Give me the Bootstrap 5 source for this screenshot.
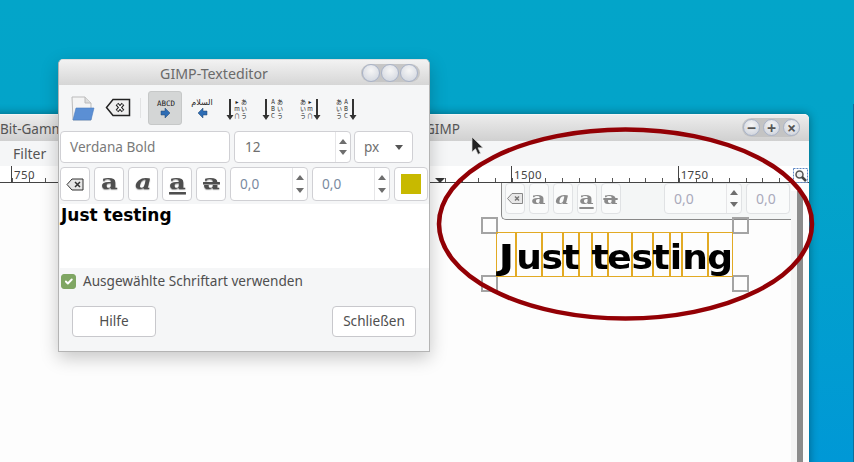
<!DOCTYPE html>
<html lang="de">
<head>
<meta charset="utf-8">
<title>GIMP-Texteditor</title>
<link href="https://cdn.jsdelivr.net/npm/bootstrap@5.3.0/dist/css/bootstrap.min.css" rel="stylesheet">
<style>
html,body{margin:0;padding:0;background:#03a4c9;overflow:hidden}
.desk{position:relative;width:854px;height:462px;overflow:hidden;font-family:"Noto Sans","Open Sans",sans-serif;color:#4c4c4c;
 background:linear-gradient(180deg,#03a5c9 0,#03a3c9 180px,#0098d6 462px)}
.edge{position:absolute;left:853px;top:104px;width:1px;height:358px;background:#0a6f9c}
.mainwin{position:absolute;left:-20px;top:114px;width:829px;height:360px;background:#fff;border-radius:5px 5px 0 0;box-shadow:0 0 10px rgba(0,0,0,.4)}
.mtitle{height:27px;background:linear-gradient(180deg,#ececec,#d0d0d0);font-size:13.5px;line-height:29px;color:#555;border-radius:5px 5px 0 0;border-top:1px solid #f4f4f4}
.mtitle .t1{width:445px;padding-left:20px}
.wctl{position:absolute;left:762px;top:4px;height:19px;width:58px;border-radius:10px;background:#c4c4c4;gap:3px;padding-left:1px}
.wctl span{width:17px;height:17px;border-radius:50%;background:radial-gradient(circle at 50% 35%,#f6f6f6,#c9ced8);border:1px solid #a9b3c8;display:flex;align-items:center;justify-content:center;font-size:16px;line-height:1;font-weight:700;color:#555}
.mmenu{height:25px;background:#f5f6f7;font-size:14px;line-height:26px;padding-left:33px;color:#555}
.ruler{height:17px;background:#fff;border-bottom:1px solid #444;padding-left:31px;overflow:hidden}
.rcell{flex:0 0 166.67px;height:16px;border-left:1px solid #444;font-size:11.5px;line-height:17px;padding-left:2px;letter-spacing:.4px;color:#444;
 background:repeating-linear-gradient(90deg,#555 0 1px,transparent 1px 16.67px) no-repeat 0 bottom/100% 4px}
.rmark{position:absolute;left:455px;top:64px;width:0;height:0;border-left:5px solid transparent;border-right:5px solid transparent;border-top:5px solid #333}
.zoombtn{position:absolute;left:813px;top:54px}
.canvas{position:relative;height:290px;background:#fdfdfd}
.sgrey{position:absolute;left:817px;top:8px;width:6px;height:300px;background:#8c8c8c}
.spale{position:absolute;left:811px;top:8px;width:6px;height:300px;background:#f5f5f5}
.ghost{position:absolute;left:521px;top:0;width:290px;height:37px;background:#f4f6f6;border-left:1px solid #888;border-bottom:1px solid #888;border-radius:0 0 0 5px;padding-left:3px;gap:4px}
.gb{width:20px;height:31px;background:#fafbfb;border:1px solid #e0e2e4;border-radius:4px;display:flex;align-items:center;justify-content:center;overflow:hidden}
.gspin{height:31px;background:#fafbfb;border:1px solid #e0e2e4;border-radius:4px;font-size:14px;color:#aab;display:flex;align-items:center}
.gspin.s1{width:78px;margin-left:39px;padding-left:9px;justify-content:space-between}
.gspin.s2{width:44px;margin-left:0;padding-left:9px}
.hd{position:absolute;width:17px;height:17px;border:2px solid #a4a4a4;background:transparent}
.h1{left:501px;top:34px}.h2{left:752px;top:34px}.h3{left:501px;top:92px}.h4{left:752px;top:92px}
.glyphs{position:absolute;left:516px;top:49px;width:237px;height:45px;font-family:"DejaVu Sans",sans-serif;font-weight:700;font-size:34px;color:#000;line-height:48px}
.glyphs span{display:flex;justify-content:center;height:45px;border:1px solid #e2aa24;overflow:visible;white-space:pre}
.glyphs span i{display:block;font-style:normal;transform:scaleX(1.06)}
.glyphs span:nth-child(1){width:20px}.glyphs span:nth-child(1) i{transform:scaleX(1.25)}
.glyphs span:nth-child(2){width:26px}.glyphs span:nth-child(3){width:21px}
.glyphs span:nth-child(4){width:16px}.glyphs span:nth-child(5){width:13px}.glyphs span:nth-child(6){width:16px}
.glyphs span:nth-child(7){width:24px}.glyphs span:nth-child(8){width:21px}.glyphs span:nth-child(9){width:17px}
.glyphs span:nth-child(10){width:12px}.glyphs span:nth-child(11){width:26px}.glyphs span:nth-child(12){width:25px}
.ring{position:absolute;left:0;top:0;pointer-events:none}
.ptr{position:absolute;left:470px;top:136px}
.dlg{position:absolute;left:58px;top:59px;width:372px;height:293px;background:#f5f6f7;border:1px solid #b4b4b4;border-top-color:#ddd;border-radius:5px 5px 0 0;box-shadow:0 6px 18px rgba(0,0,0,.22)}
.dtitle{position:relative;height:25px;background:linear-gradient(180deg,#f2f2f2,#d6d6d6);text-align:center;font-size:14.2px;line-height:27px;color:#6a6a6a;border-radius:5px 5px 0 0;padding-right:60px}
.dctl{position:absolute;left:302px;top:4px;width:59px;height:18px;border-radius:10px;background:#c6c6c6;gap:1px;padding-left:1px}
.dctl span{width:18px;height:18px;border-radius:50%;background:radial-gradient(circle at 50% 35%,#f6f6f6,#cdd2dc);border:1px solid #a9b3c8}
.dtool{height:46px;padding-left:10px;position:relative}
.sep{position:absolute;left:81px;top:13px;width:1px;height:20px;background:#e2e3e4}
.tsel{position:absolute;left:89px;top:6px;width:34px;height:34px;background:#d4d6d6;border:1px solid #c6c8c8;border-radius:3px}
.ics{position:absolute;left:0;top:0}
.drow{padding-left:1px}
.fieldx{height:32px;background:#fff;border:1px solid #d0d0d4;border-radius:4px;font-size:13.6px;color:#6f6f6f;display:flex;align-items:center}
.ff{width:170px;padding-left:9px;margin-right:4px;color:#7a7a7a}
.fs{width:117px;padding-left:10px;margin-right:3px;justify-content:space-between}
.fu{width:59px;padding:0 9px;justify-content:space-between}
.arr{width:15px;align-self:stretch;border-left:1px solid #e6e6e8;display:flex;flex-direction:column;align-items:center;justify-content:space-evenly}
.up{width:0;height:0;border-left:4px solid transparent;border-right:4px solid transparent;border-bottom:5px solid #6e6e6e}
.dn{width:0;height:0;border-left:4px solid transparent;border-right:4px solid transparent;border-top:5px solid #6e6e6e}
.carr{width:0;height:0;border-left:4.5px solid transparent;border-right:4.5px solid transparent;border-top:5px solid #555}
.row2x{padding-left:1px;margin-top:4px;gap:4px}
.sb{width:30px;height:34px;padding:0;background:#fff;border:1px solid #d0d0d4;border-radius:4px;display:flex;align-items:center;justify-content:center}
.la{display:inline-block;font-family:"DejaVu Serif",serif;font-weight:700;font-size:20px;line-height:1;color:#4e4e4e;text-shadow:0 1px 1px #999;position:relative;top:-2px;transform:scaleX(1.3)}
.gla{display:inline-block;font-family:"DejaVu Serif",serif;font-weight:700;font-size:17px;line-height:1;color:#8b8b8b;transform:scaleX(1.3)}
.ital{font-style:italic}.und{text-decoration:underline;text-decoration-thickness:2px;text-underline-offset:3px}.stk{text-decoration:line-through;text-decoration-thickness:2px}
.f2{height:34px;width:78px;padding-left:9px;justify-content:space-between;color:#7a8aa0}
.swb{width:34px;height:34px;padding:0;background:#fff;border:1px solid #d0d0d4;border-radius:4px;display:flex;align-items:center;justify-content:center}
.swatch{width:20px;height:20px;background:#c8b900}
.tedit{height:64px;margin-top:3px;margin-left:1px;padding-left:1px;background:#fff;font-family:"DejaVu Sans",sans-serif;font-weight:700;font-size:17px;line-height:22px;color:#000}
.chk{height:27px;margin:0;padding:0 0 0 2px;gap:7px;font-size:13.6px;color:#4f4f4f;min-height:0}
.chk .form-check-input{float:none;margin:0;width:15px;height:15px;background-color:#7fa663;border-color:#7fa663;border-radius:3px;opacity:1}
.dbtns{padding:11px 13px 0}
.pb{width:84px;height:31px;padding:0;background:#fff;border:1px solid #c8c8cc;border-radius:4px;font-size:13.6px;color:#4f4f4f}
</style>
</head>
<body>
<div class="desk">
  <div class="edge"></div>

  <div class="mainwin">
    <div class="mtitle d-flex"><span class="t1">Bit-Gamma</span><span>GIMP</span></div>
    <div class="wctl d-flex align-items-center"><span>&#8722;</span><span>+</span><span>&#215;</span></div>
    <div class="mmenu">Filter</div>
    <div class="ruler d-flex">
      <div class="rcell">750</div><div class="rcell">1000</div><div class="rcell">1250</div><div class="rcell">1500</div><div class="rcell">1750</div>
    </div>
    <div class="rmark"></div>
    <svg class="zoombtn" width="15" height="15" viewBox="0 0 15 15"><rect x=".5" y=".5" width="14" height="14" fill="#fff" stroke="#5d86c4" stroke-dasharray="2 1"/><circle cx="6.500" cy="6.500" r="3.500" fill="#eee" stroke="#555" stroke-width="1.500"/><path d="M9 9l4 4" stroke="#444" stroke-width="2.500"/></svg>
    <div class="canvas">
      <div class="spale"></div><div class="sgrey"></div>
      <div class="ghost d-flex align-items-start">
        <div class="gb"><svg width="16" height="11" viewBox="0 0 16 11"><path d="M5 .5h10.500v10H5L.5 5.500z" fill="#e8e8e8" stroke="#888"/><path d="M8 3.500l4 4m0-4l-4 4" stroke="#777" stroke-width="1.500"/></svg></div>
        <div class="gb"><span class="gla">a</span></div>
        <div class="gb"><span class="gla ital">a</span></div>
        <div class="gb"><span class="gla und">a</span></div>
        <div class="gb"><span class="gla stk">a</span></div>
        <div class="gspin s1"><span>0,0</span><span class="arr"><i class="up"></i><i class="dn"></i></span></div>
        <div class="gspin s2"><span>0,0</span></div>
      </div>
      <div class="hd h1"></div><div class="hd h2"></div><div class="hd h3"></div><div class="hd h4"></div>
      <div class="glyphs d-flex"><span><i>J</i></span><span><i>u</i></span><span><i>s</i></span><span><i>t</i></span><span> </span><span><i>t</i></span><span><i>e</i></span><span><i>s</i></span><span><i>t</i></span><span><i>i</i></span><span><i>n</i></span><span><i>g</i></span></div>
    </div>
  </div>

  <svg class="ring" width="854" height="462" viewBox="0 0 854 462"><ellipse cx="625.500" cy="224" rx="186.500" ry="94.500" fill="none" stroke="#930005" stroke-width="4.500"/></svg>

  <svg class="ptr" width="16" height="20" viewBox="0 0 16 20"><path d="M2 1v15l3.500-3.200 2.500 5.500 2.500-1.100-2.500-5.400h5z" fill="#222" stroke="#ddd" stroke-width=".7"/></svg>

  <div class="dlg">
    <div class="dtitle">GIMP-Texteditor
      <div class="dctl d-flex align-items-center"><span></span><span></span><span></span></div>
    </div>
    <div class="dtool">
      <div class="sep"></div>
      <div class="tsel"></div>
      <svg class="ics" width="370" height="46" viewBox="58 85 370 46">
        <path d="M71 97h13l6 6v17H72z" fill="#f4f4f4" stroke="#bbb"/><path d="M84 97v6h6" fill="#ddd" stroke="#bbb"/>
        <path d="M75 108h18l-3 12H72z" fill="#5b8fd4" stroke="#4a7cc0" stroke-width=".6"/>
        <path d="M112 99.500h16.500v16H112l-6.500-8z" fill="#efefef" stroke="#222" stroke-width="1.500"/>
        <path d="M116 104l6 7m0-7l-6 7" stroke="#222" stroke-width="3.500"/><path d="M116.500 104.500l5 6m0-6l-5 6" stroke="#fff" stroke-width="1.300"/>
        <text x="165" y="106" text-anchor="middle" font-family="DejaVu Sans Mono,monospace" font-size="7.500" fill="#222">ABCD</text>
        <path d="M160 111h4v-3l5 5-5 5v-3h-4z" fill="#2e6db5" stroke="#24466f" stroke-width=".5"/>
        <text x="201" y="105" text-anchor="middle" font-family="DejaVu Sans,sans-serif" font-size="8" fill="#222">السلام</text>
        <path d="M206 111h-4v-3l-5 5 5 5v-3h4z" fill="#2e6db5" stroke="#24466f" stroke-width=".5"/>
        <g font-family="'Noto Sans CJK JP','DejaVu Sans',sans-serif" font-size="6" fill="#222" text-anchor="middle">
          <text x="236" y="104">&#9656;</text><text x="243" y="104">あ</text><text x="236" y="111">m</text><text x="243" y="111">い</text><text x="236" y="118">&#8745;</text><text x="243" y="118">う</text>
          <text x="272" y="104">A</text><text x="279" y="104">あ</text><text x="272" y="111">B</text><text x="279" y="111">い</text><text x="272" y="118">C</text><text x="279" y="118">う</text>
          <text x="302" y="104">あ</text><text x="309" y="104">&#9656;</text><text x="302" y="111">い</text><text x="309" y="111">m</text><text x="302" y="118">う</text><text x="309" y="118">&#8745;</text>
          <text x="338" y="104">あ</text><text x="345" y="104">A</text><text x="338" y="111">い</text><text x="345" y="111">B</text><text x="338" y="118">う</text><text x="345" y="118">C</text>
        </g>
        <path d="M229 99v16M265 99v16M316 99v16M352 99v16" stroke="#333" stroke-width="2"/>
        <path d="M225.500 115h7l-3.500 5zM261.500 115h7l-3.500 5zM312.500 115h7l-3.500 5zM348.500 115h7l-3.500 5z" fill="#333"/>
      </svg>
    </div>
    <div class="drow d-flex">
      <div class="fieldx ff">Verdana Bold</div>
      <div class="fieldx fs"><span>12</span><span class="arr"><i class="up"></i><i class="dn"></i></span></div>
      <div class="fieldx fu"><span>px</span><i class="carr"></i></div>
    </div>
    <div class="row2x d-flex">
      <button type="button" class="btn sb"><svg width="18" height="13" viewBox="0 0 18 13"><path d="M6 1h11v11H6L1 6.500z" fill="#e6e6e6" stroke="#333"/><path d="M9 4l5 5m0-5l-5 5" stroke="#333" stroke-width="1.500"/></svg></button>
      <button type="button" class="btn sb"><span class="la">a</span></button>
      <button type="button" class="btn sb"><span class="la ital">a</span></button>
      <button type="button" class="btn sb"><span class="la und">a</span></button>
      <button type="button" class="btn sb"><span class="la stk">a</span></button>
      <div class="fieldx f2"><span>0,0</span><span class="arr"><i class="up"></i><i class="dn"></i></span></div>
      <div class="fieldx f2"><span>0,0</span><span class="arr"><i class="up"></i><i class="dn"></i></span></div>
      <button type="button" class="btn swb"><span class="swatch"></span></button>
    </div>
    <div class="tedit">Just testing</div>
    <div class="form-check chk d-flex align-items-center">
      <input class="form-check-input" type="checkbox" id="fcheck" checked>
      <label class="form-check-label" for="fcheck">Ausgewählte Schriftart verwenden</label>
    </div>
    <div class="dbtns d-flex justify-content-between">
      <button type="button" class="btn pb">Hilfe</button>
      <button type="button" class="btn pb">Schließen</button>
    </div>
  </div>
</div>
<script src="https://cdn.jsdelivr.net/npm/bootstrap@5.3.0/dist/js/bootstrap.bundle.min.js"></script>
</body>
</html>
